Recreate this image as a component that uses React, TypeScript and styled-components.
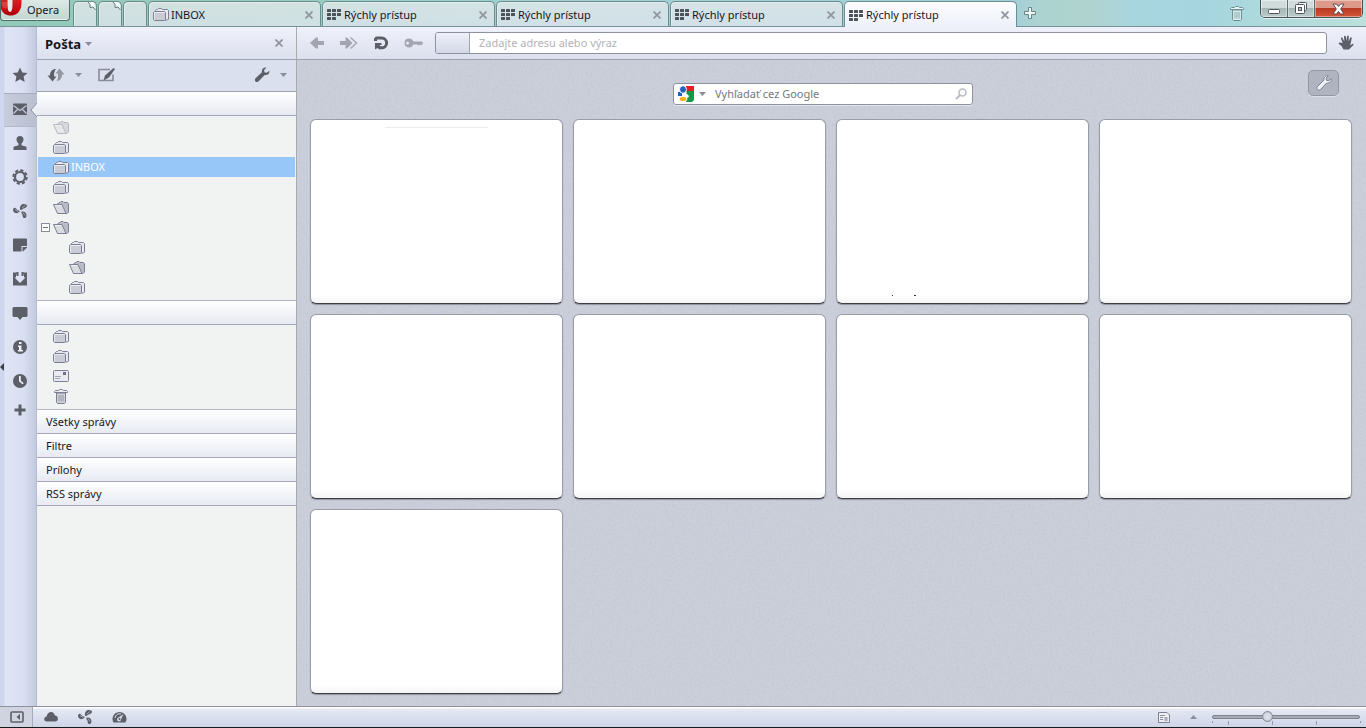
import React from "react";
import styled, { createGlobalStyle, css } from "styled-components";

const ink = "#5d5f68";
const faded = "#a3a6b0";
const line = "#9ea2b0";

const GlobalStyle = createGlobalStyle`
  * { box-sizing: border-box; }
  body {
    margin: 0;
    font-family: "Noto Sans", "Open Sans", sans-serif;
    font-size: 12px;
    line-height: 16px;
    color: #16171b;
  }
  button, input { font: inherit; color: inherit; }
  button { border: 0; padding: 0; background: none; }
  svg { display: block; flex: none; }
`;

/* ---------- window ---------- */

const Window = styled.div`
  min-height: 100vh;
  display: flex;
  flex-direction: column;
  background: #dfe3f0;
`;

const TabBar = styled.header`
  height: 27px;
  display: flex;
  align-items: flex-start;
  border-bottom: 1px solid #75919a;
  background: linear-gradient(to right, #93c9b8 0, #96ccbd 20%, #9bcfca 28%, #a3d0d6 45%, #a2cfda 74%, #acd3d0 76%, #afd4d0 80%, #a8d6df 83%, #a6d5e0 88%, #b0dbda 94%, #bde0dc 100%);
`;

const OperaButton = styled.button`
  width: 70px;
  height: 21px;
  margin-right: 3px;
  display: flex;
  align-items: center;
  gap: 4px;
  border: 1px solid #4f6e68;
  border-top: 0;
  border-radius: 0 0 4px 4px;
  background: linear-gradient(#dde9e5, #c2d6cf);
  box-shadow: inset 0 -1px 0 #e9f4f0;
  font-size: 11px;
`;

const Tabs = styled.nav`
  display: flex;
  gap: 1px;
  padding-top: 1px;
`;

const Tab = styled.div<{ $active?: boolean; $pinned?: boolean }>`
  width: ${(p) => (p.$pinned ? 24 : 173)}px;
  height: ${(p) => (p.$active ? 26 : 25)}px;
  display: flex;
  align-items: center;
  justify-content: space-between;
  padding: 1px 6px 0 4px;
  border: 1px solid #6c8d8f;
  border-bottom: 0;
  border-radius: 5px 5px 0 0;
  background: ${(p) =>
    p.$active
      ? "linear-gradient(#fdfdff, #edf0f9)"
      : "linear-gradient(rgba(224, 231, 232, .82), rgba(220, 229, 236, .8))"};
  box-shadow: inset 1px 1px 0 rgba(255, 255, 255, .35);
  ${(p) =>
    p.$pinned &&
    css`
      padding: 0;
      align-items: flex-start;
      justify-content: flex-end;
    `}
`;

const TabTitle = styled.button<{ $gap: number }>`
  display: flex;
  align-items: center;
  gap: ${(p) => p.$gap}px;
  font-size: 11px;
  white-space: nowrap;
`;

const CloseButton = styled.button`
  width: 10px;
  height: 10px;
  display: grid;
  place-items: center;
`;

const TabBarButton = styled.button`
  width: 26px;
  height: 26px;
  display: grid;
  place-items: center;
`;

const Spacer = styled.div`
  flex: 1;
`;

const WindowButtons = styled.div`
  display: flex;
  height: 18px;
  margin: 0 3px 0 10px;
  border: 1px solid #47555b;
  border-top: 0;
  border-radius: 0 0 5px 5px;
  overflow: hidden;
  box-shadow: 0 1px 0 #dff0f0;
`;

const WindowButton = styled.button<{ $close?: boolean }>`
  width: ${(p) => (p.$close ? 47 : 27)}px;
  display: grid;
  place-items: center;
  border-right: ${(p) => (p.$close ? "0" : "1px solid #5c6c70")};
  background: ${(p) =>
    p.$close
      ? "linear-gradient(#dd9a8a 0 45%, #b93a22 50%, #d4563a)"
      : "linear-gradient(#d0dcdb 0 45%, #a5b6b6 50%, #bdccca)"};
  box-shadow: inset 0 0 0 1px rgba(255, 255, 255, .4);
`;

/* ---------- left rail and panel ---------- */

const Body = styled.div`
  flex: 1;
  display: flex;
`;

const Rail = styled.nav`
  position: relative;
  width: 37px;
  flex: none;
  padding: 32px 0 0 4px;
  display: flex;
  flex-direction: column;
  background: linear-gradient(to right, #cfd7ee 0 4px, #dfe5f5 5px, #d9dff1 24px, #c3cadf 36px, #a9afc1 37px);
`;

const RailButton = styled.button<{ $active?: boolean; $short?: boolean }>`
  position: relative;
  height: ${(p) => (p.$short ? 24 : 34)}px;
  display: grid;
  place-items: center;
  padding: 0 2px 2px 0;
  ${(p) =>
    p.$active &&
    css`
      background: linear-gradient(to right, #c8cddd, #b9bfd0);
      border-top: 1px solid #a9afc0;
      border-bottom: 1px solid #b3b9ca;
    `}
`;

const Notch = styled.svg`
  position: absolute;
  right: 0;
  top: 9px;
`;

const Splitter = styled.svg`
  position: absolute;
  left: 0;
  top: 336px;
`;

const Panel = styled.aside`
  width: 260px;
  flex: none;
  display: flex;
  flex-direction: column;
  border-right: 1px solid #a9aaae;
  background: #f1f3f3;
`;

const PanelHeader = styled.div`
  height: 33px;
  display: flex;
  align-items: center;
  justify-content: space-between;
  padding: 0 12px 0 8px;
  border-bottom: 1px solid ${line};
  background: linear-gradient(#eff1fa, #dce0ee);
`;

const PanelTitle = styled.button`
  display: flex;
  align-items: center;
  gap: 4px;
  padding-top: 2px;
  font-size: 13px;
  font-weight: 700;
`;

const PanelTools = styled.div`
  height: 32px;
  display: flex;
  align-items: center;
  gap: 8px;
  padding: 0 8px 1px 10px;
  border-bottom: 1px solid ${line};
  background: #dbe0ee;
`;

const ToolButton = styled.button`
  min-width: 10px;
  height: 24px;
  display: grid;
  place-items: center;
`;

const Section = styled.button`
  height: 24px;
  flex: none;
  padding: 0 9px;
  text-align: left;
  font-size: 11px;
  border-bottom: 1px solid #a4a8b8;
  background: linear-gradient(#ffffff, #e7eaf2);
`;

const Tree = styled.ul`
  list-style: none;
  margin: 0;
  padding: 1px 1px 3px;
  border-bottom: 1px solid #b4b8c6;
`;

const TreeRow = styled.li<{ $level?: number; $selected?: boolean }>`
  height: 20px;
  display: flex;
  align-items: center;
  gap: 2px;
  padding-left: ${(p) => (p.$level ? 31 : 3)}px;
  font-size: 11px;
  color: ${(p) => (p.$selected ? "#ffffff" : "inherit")};
  background: ${(p) => (p.$selected ? "#97c6f8" : "none")};
`;

const Twist = styled.span`
  width: 10px;
`;

/* ---------- page ---------- */

const Main = styled.main`
  flex: 1;
  min-width: 0;
  display: flex;
  flex-direction: column;
`;

const AddressBar = styled.div`
  height: 33px;
  display: flex;
  align-items: center;
  padding: 0 4px;
  border-bottom: 1px solid ${line};
  background: linear-gradient(#eff1fa, #dce0ee);
`;

const NavButton = styled.button`
  width: 32px;
  height: 28px;
  display: grid;
  place-items: center;
`;

const AddressField = styled.div`
  flex: 1;
  height: 22px;
  display: flex;
  margin: 0 3px 0 6px;
  border: 1px solid #8d91a0;
  border-radius: 3px;
  overflow: hidden;
  background: #ffffff;
`;

const SiteBadge = styled.button`
  width: 34px;
  border-right: 1px solid #a1a5b3;
  background: linear-gradient(#eef0f8, #d4d9e8);
`;

const TextInput = styled.input<{ $hint: string }>`
  flex: 1;
  min-width: 0;
  padding: 0 9px;
  border: 0;
  outline: 0;
  background: none;
  font-size: 11px;
  &::placeholder {
    color: ${(p) => p.$hint};
    opacity: 1;
  }
`;

const SpeedDial = styled.section`
  position: relative;
  flex: 1;
  padding-bottom: 12px;
  background: #cbcfda;
`;

const Grain = styled.svg`
  position: absolute;
  inset: 0;
  width: 100%;
  height: 100%;
  pointer-events: none;
`;

const DialHeader = styled.div`
  position: relative;
  display: grid;
  grid-template-columns: 1fr 300px 1fr;
  align-items: start;
  padding: 10px 27px 14px 10px;
`;

const Search = styled.form`
  grid-column: 2;
  height: 22px;
  margin-top: 13px;
  display: flex;
  align-items: center;
  padding: 0 5px 0 4px;
  border: 1px solid #8e929f;
  border-radius: 3px;
  background: #ffffff;
  box-shadow: 0 1px 0 #e3e6ee;
`;

const EngineButton = styled.button`
  display: flex;
  align-items: center;
  gap: 5px;
`;

const SettingsButton = styled.button`
  justify-self: end;
  width: 31px;
  height: 26px;
  display: grid;
  place-items: center;
  border: 1px solid #9397a5;
  border-radius: 5px;
  background: #b0b3c0;
  box-shadow: 0 1px 0 #dde0e8;
`;

const Dials = styled.div`
  position: relative;
  display: grid;
  grid-template-columns: repeat(4, 1fr);
  gap: 10px;
  padding: 0 14px 0 13px;
`;

const Dial = styled.a`
  position: relative;
  display: block;
  aspect-ratio: 253 / 185;
  border: 1px solid #999ca9;
  border-bottom-color: #3d3f45;
  border-radius: 6px;
  background: linear-gradient(#ffffff calc(100% - 8px), #f4f4f4);
  box-shadow: 0 1px 1px rgba(60, 62, 70, .4);
`;

const Thumbnail = styled.svg`
  width: 100%;
  height: 100%;
`;

/* ---------- status bar ---------- */

const StatusBar = styled.footer`
  height: 22px;
  display: flex;
  align-items: stretch;
  padding-right: 6px;
  border-top: 1px solid #8d919e;
  border-bottom: 1px solid #15191c;
  background: linear-gradient(#ffffff 0 1px, #e5e9f4 2px, #ced5e7);
`;

const StatusButton = styled.button<{ $active?: boolean }>`
  width: ${(p) => (p.$active ? 33 : 34)}px;
  display: grid;
  place-items: center;
  ${(p) =>
    p.$active &&
    css`
      padding-left: 1px;
      background: #d0d4e0;
      border-right: 1px solid #a6abba;
      margin-right: 1px;
    `}
`;

const ViewTools = styled.div`
  display: flex;
  align-items: center;
  gap: 20px;
  margin-right: 15px;
`;

const ViewButton = styled.button``;

const Zoom = styled.label`
  position: relative;
  width: 148px;
  display: flex;
`;

const Ticks = styled.svg`
  position: absolute;
  left: 0;
  top: 14px;
`;

const Range = styled.input`
  appearance: none;
  width: 100%;
  height: 20px;
  margin: 0;
  background: none;
  &::-webkit-slider-runnable-track {
    height: 4px;
    border: 1px solid #7f8390;
    border-radius: 2px;
    background: #a7abb8;
  }
  &::-webkit-slider-thumb {
    appearance: none;
    width: 11px;
    height: 11px;
    margin-top: -5px;
    border: 1px solid #858995;
    border-radius: 50%;
    background: #d9dde8;
    box-shadow: inset 0 0 0 1px #c1c5d1;
  }
`;

/* ---------- icons ---------- */

type IconProps = { size?: number; color?: string; children?: React.ReactNode };
const Icon = ({ size = 16, color = ink, children }: IconProps) => (
  <svg width={size} height={size} viewBox="0 0 16 16" fill={color} aria-hidden="true">
    {children}
  </svg>
);

const Cross = () => (
  <svg width="8" height="8" viewBox="0 0 8 8" aria-hidden="true">
    <path d="M.5 .5l7 7M7.500 .5l-7 7" stroke="#92969f" strokeWidth="1.800" />
  </svg>
);

const Caret = () => (
  <svg width="7" height="4" viewBox="0 0 7 4" fill="#8b8e9a" aria-hidden="true">
    <path d="M0 0h7L3.500 4z" />
  </svg>
);

const OperaLogo = () => (
  <svg width="22" height="20" viewBox="0 0 22 20" aria-hidden="true">
    <defs>
      <linearGradient id="opera" x1="0" y1="0" x2="0" y2="1">
        <stop offset="0" stopColor="#d81e22" />
        <stop offset=".6" stopColor="#c90a12" />
        <stop offset="1" stopColor="#a80008" />
      </linearGradient>
    </defs>
    <path d="M0 0h20.500v3c0 7-4 12.500-10.500 12.500C4.500 15.500 1.500 13 0 9z" fill="url(#opera)" />
    <path d="M6.500 0h5v4c0 4.500-.8 8-2.500 8S6.500 9 6.500 4z" fill="#e3ecea" />
    <path d="M1 6c1.500 2.500 3.500 3 5 2V2L1 2z" fill="#f08a88" opacity=".35" />
  </svg>
);

const PageCorner = () => (
  <svg width="9" height="9" viewBox="0 0 9 9" aria-hidden="true">
    <path d="M1 0l2 2.500v3l3-.5 2 2.500V3L6 0z" fill="#f8fbfb" />
    <path d="M1 0l2 2.500v3l3-.5 2.500 3" fill="none" stroke="#5f7a79" />
  </svg>
);

const GridIcon = () => (
  <svg width="14" height="11" viewBox="0 0 14 11" fill="#4b525c" aria-hidden="true">
    {[0, 5, 10].map((x) =>
      [0, 4, 8].map((y) => (x === 10 && y === 8 ? null : <rect key={`${x}-${y}`} x={x} y={y} width="4" height="3" rx=".5" />))
    )}
  </svg>
);

const Folder = () => (
  <svg width="16" height="13" viewBox="0 0 16 13" stroke="#7d8092" aria-hidden="true">
    <path d="M2.500 3.500V2.500l1-1h1l1-1h3l1 1h5l1 1v8.500l-1 1H12" fill="#e6e8ed" />
    <path d="M.500 4.500l1-1H11.500l1 1v7l-1 1H1.500l-1-1z" fill="#c9ccd4" />
    <path d="M1.500 11.500v-7H11.500" fill="none" stroke="#e9ebef" />
  </svg>
);

const OpenFolder = ({ dim }: { dim?: boolean }) => (
  <svg width="16" height="13" viewBox="0 0 16 13" stroke="#7d8092" opacity={dim ? 0.5 : 1} aria-hidden="true">
    <path d="M4.500 3l1.500-1.500h1l1-1h2l1 1h3.500l1 1V11l-1.500 1.500H5z" fill="#b9bcc7" />
    <path d="M.500 3.500H9l4 9H4.500z" fill="#d9dbe1" />
    <path d="M2 4.500h6.500" stroke="#eff0f3" />
  </svg>
);

const Letter = () => (
  <svg width="16" height="12" viewBox="0 0 16 12" aria-hidden="true">
    <rect x=".5" y=".5" width="15" height="11" rx="1" fill="#e9ebf0" stroke="#7d8092" />
    <path d="M10 2h3v3h-3z" fill="#6f7283" />
    <path d="M2 6.500h6M2 8.500h5" stroke="#a0a3b0" />
  </svg>
);

const Trash = ({ light }: { light?: boolean }) => (
  <svg width="16" height="15" viewBox="0 0 16 15" stroke={light ? "#6f9196" : "#7d8092"} aria-hidden="true">
    <path d="M3.500 4h9v9.500l-1 1h-7l-1-1z" fill={light ? "#d6eaea" : "#d0d3da"} />
    <path d="M1.500 3.500v-1l1-1h3l1-1h3l1 1h3l1 1v1z" fill={light ? "#e7f3f3" : "#eceef2"} />
    <path d="M6 6v6.500M8 6v6.500M10 6v6.500" opacity=".7" />
  </svg>
);

const Collapse = () => (
  <svg width="9" height="9" viewBox="0 0 9 9" aria-hidden="true">
    <rect x=".5" y=".5" width="8" height="8" fill="#fbfbfb" stroke="#8b8d99" />
    <path d="M2 4.500h5" stroke="#6d6f7c" />
  </svg>
);

const Share = () => (
  <Icon>
    <path d="M8 6.500C7.500 3 9.500 1 12 1c1.500 0 3 .8 3 1.800C15 5 12 5 10.500 6.200 9.500 7 8.500 7.500 8 6.500z" />
    <path d="M7.500 8.500C5.500 11 2.800 10.500 1.500 8.500 .7 7.200 1 5.500 2 5c1.800-.8 2.300 1.800 4 2.300 1.200.3 2 .5 1.500 1.200z" />
    <path d="M9.500 8.800c3-.8 5 1.200 5 3.600 0 1.600-1.200 2.900-2.400 2.600-1.900-.4-1-2.600-2-4-.6-1-1.400-1.900-.6-2.200z" />
    <path d="M10 5l3-2.500M3 6.500l3 2M11 9.500l2 3" stroke="#a2a5b1" strokeWidth="1" />
  </Icon>
);

const wrench =
  "M15.300 3.700l-2.500 2-2.300-.4-.4-2.300L12.300.7C9.600.2 7.500 2.200 7.900 5.200L1.600 11.300c-1.100 1-.9 2.700.1 3.400.9.700 2.200.500 3-.4l5.900-6.200c3.200.3 5.200-1.800 4.700-4.400z";

const railIcons: { name: string; art: React.ReactNode }[] = [
  { name: "Záložky", art: <Icon><path d="M8 .500l2.300 5 5.200.500-3.900 3.600 1.100 5.400L8 12.300 3.300 15l1.100-5.400L.500 6l5.200-.500z" /></Icon> },
  { name: "Pošta", art: <Icon><rect x="1" y="2.500" width="14" height="11.500" rx="1" /><path d="M1.500 4.500L8 9.500l6.500-5M1.500 12.500l4-4M14.500 12.500l-4-4" fill="none" stroke="#c3c8d7" strokeWidth="1.200" /></Icon> },
  { name: "Kontakty", art: <Icon><path d="M8 1c2.300 0 3.500 1.500 3.500 3.500 0 1.800-.9 3.200-2 4V10.300l5 1.400V15h-13v-3.300l5-1.400V8.500c-1.100-.8-2-2.200-2-4C4.500 2.500 5.700 1 8 1z" /></Icon> },
  { name: "Nastavenia", art: <Icon><circle cx="8" cy="8" r="6.700" fill="none" stroke={ink} strokeWidth="2" strokeDasharray="3.260 2" /><circle cx="8" cy="8" r="5" fill="none" stroke={ink} strokeWidth="2.200" /></Icon> },
  { name: "Unite", art: <Share /> },
  { name: "Poznámky", art: <Icon><path d="M1.500 1.500h13l.5.5v7H9.500v5.500h-8L1 14V2z" /><path d="M15 10v.500L11 14.500h-.5V10z" /></Icon> },
  { name: "Prenosy", art: <Icon><path d="M1 1.500h14v13H1z" /><path d="M5 1h6v1.500L12 4v2.500h1.500L8 12 2.500 6.500H4V4l1-1.500z" fill="#dce2f3" /><path d="M4.500 1h2v4h-2zM9.500 1h2v4h-2z" /></Icon> },
  { name: "Rozhovor", art: <Icon><path d="M1.500 2h13l1 1v8l-1 1h-4L8 15l-2.500-3h-4l-1-1V3z" /></Icon> },
  { name: "Informácie", art: <Icon><circle cx="8" cy="8" r="7" /><path d="M7 3h2.500v2H7zM6 6.500h3.500V11H11v1.500H6V11h1V8H6z" fill="#eef0f8" /></Icon> },
  { name: "História", art: <Icon><circle cx="8" cy="8" r="7" /><path d="M7 3h1.800v4.700l3 2.500-1.300 1L7 8.500z" fill="#eef0f8" /></Icon> },
];

/* ---------- content ---------- */

type Kind = "folder" | "open" | "dim" | "letter" | "trash";
type Row = { kind: Kind; label?: string; level?: number; expanded?: boolean };

const account: Row[] = [
  { kind: "dim" },
  { kind: "folder" },
  { kind: "folder", label: "INBOX" },
  { kind: "folder" },
  { kind: "open" },
  { kind: "open", expanded: true },
  { kind: "folder", level: 1 },
  { kind: "open", level: 1 },
  { kind: "folder", level: 1 },
];

const local: Row[] = [{ kind: "folder" }, { kind: "folder" }, { kind: "letter" }, { kind: "trash" }];

const art: Record<Kind, React.ReactNode> = {
  folder: <Folder />,
  open: <OpenFolder />,
  dim: <OpenFolder dim />,
  letter: <Letter />,
  trash: <Trash />,
};

const FolderTree = ({ rows }: { rows: Row[] }) => (
  <Tree>
    {rows.map((row, i) => (
      <TreeRow key={i} $level={row.level} $selected={row.label === "INBOX"}>
        {!row.level && <Twist>{row.expanded && <Collapse />}</Twist>}
        {art[row.kind]}
        {row.label}
      </TreeRow>
    ))}
  </Tree>
);

const quickTabs = [false, false, false, true];

export default function App() {
  return (
    <Window>
      <GlobalStyle />
      <TabBar>
        <OperaButton>
          <OperaLogo />
          Opera
        </OperaButton>
        <Tabs aria-label="Karty">
          <Tab $pinned><PageCorner /></Tab>
          <Tab $pinned><PageCorner /></Tab>
          <Tab $pinned />
          <Tab>
            <TabTitle $gap={2}><Folder />INBOX</TabTitle>
            <CloseButton aria-label="Zavrieť kartu"><Cross /></CloseButton>
          </Tab>
          {quickTabs.map((active, i) => (
            <Tab key={i} $active={active}>
              <TabTitle $gap={3}><GridIcon />Rýchly prístup</TabTitle>
              <CloseButton aria-label="Zavrieť kartu"><Cross /></CloseButton>
            </Tab>
          ))}
        </Tabs>
        <TabBarButton aria-label="Nová karta">
          <svg width="14" height="14" viewBox="0 0 14 14" aria-hidden="true">
            <path d="M5.500 1.500h3v4h4v3h-4v4h-3v-4h-4v-3h4z" fill="#eef7f3" stroke="#66877f" />
          </svg>
        </TabBarButton>
        <Spacer />
        <TabBarButton aria-label="Zatvorené karty"><Trash light /></TabBarButton>
        <WindowButtons>
          <WindowButton aria-label="Minimalizovať">
            <svg width="13" height="12" viewBox="0 0 13 12"><rect x=".5" y="6.500" width="11" height="4" rx="1" fill="#fff" stroke="#4d525c" /></svg>
          </WindowButton>
          <WindowButton aria-label="Obnoviť">
            <svg width="13" height="13" viewBox="0 0 13 13" fill="#fff" stroke="#4d525c"><rect x="3.500" y=".5" width="8" height="8" rx="1" /><rect x=".5" y="2.500" width="9" height="9" rx="1" /><rect x="3.500" y="5.500" width="3" height="3" fill="#b7c5c6" /></svg>
          </WindowButton>
          <WindowButton $close aria-label="Zavrieť">
            <svg width="13" height="12" viewBox="0 0 13 12"><path d="M1 1h3.500l2 2.500 2-2.500H12L8.700 6l3.300 5H8.500l-2-2.500-2 2.500H1l3.300-5z" fill="#fff" stroke="#5b4a52" /></svg>
          </WindowButton>
        </WindowButtons>
      </TabBar>

      <Body>
        <Rail aria-label="Panely">
          {railIcons.map(({ name, art: drawing }) => (
            <RailButton key={name} aria-label={name} $active={name === "Pošta"}>
              {drawing}
              {name === "Pošta" && (
                <Notch width="7" height="14" viewBox="0 0 7 14"><path d="M7 0L1 7l6 7" fill="#eceff6" stroke="#8f94a5" /></Notch>
              )}
            </RailButton>
          ))}
          <RailButton $short aria-label="Pridať panel">
            <Icon><path d="M6.500 2.500h3v4h4v3h-4v4h-3v-4h-4v-3h4z" /></Icon>
          </RailButton>
          <Splitter width="4" height="8" viewBox="0 0 4 8"><path d="M4 0v8L0 4z" fill="#3b3f4a" /></Splitter>
        </Rail>

        <Panel>
          <PanelHeader>
            <PanelTitle>Pošta<Caret /></PanelTitle>
            <CloseButton aria-label="Zavrieť panel"><Cross /></CloseButton>
          </PanelHeader>
          <PanelTools>
            <ToolButton aria-label="Skontrolovať poštu">
              <svg width="18" height="14" viewBox="0 0 18 14" aria-hidden="true">
                <path d="M9 1C5.500 1 2.800 3.500 3 7.500H.500L5.500 13.500l4-5H7.200C6.500 5.500 7.500 3 9 1z" fill={ink} />
                <path d="M9.500 13c3.500 0 5.800-3 5.500-6.500h2.500L12.500.500l-4 5h2.300C11.500 8.500 11 11 9.500 13z" fill="#9396a1" />
              </svg>
            </ToolButton>
            <ToolButton aria-label="Možnosti kontroly"><Caret /></ToolButton>
            <ToolButton aria-label="Nová správa">
              <svg width="32" height="14" viewBox="-7 0 32 14" aria-hidden="true">
                <path d="M12 1.500H1v11h14V6.500" fill="none" stroke="#8a8d98" strokeWidth="1.600" />
                <path d="M15.500 0L17 1l-6 8.500L5.500 12.500l1.500-5z" fill={ink} />
              </svg>
            </ToolButton>
            <Spacer />
            <ToolButton aria-label="Nastavenia"><Icon><path d={wrench} /></Icon></ToolButton>
            <ToolButton aria-label="Možnosti"><Caret /></ToolButton>
          </PanelTools>
          <Section aria-label="Účet" />
          <FolderTree rows={account} />
          <Section aria-label="Miestne priečinky" />
          <FolderTree rows={local} />
          <Section>Všetky správy</Section>
          <Section>Filtre</Section>
          <Section>Prílohy</Section>
          <Section>RSS správy</Section>
        </Panel>

        <Main>
          <AddressBar>
            <NavButton aria-label="Späť">
              <Icon color={faded}><path d="M1 8L7 2.500h2v3.500h6v4H9v3.500H7z" /></Icon>
            </NavButton>
            <NavButton aria-label="Dopredu">
              <svg width="18" height="14" viewBox="0 0 18 14" aria-hidden="true">
                <path d="M0 5h5.500V1.500H7L12.500 7 7 12.500H5.500V9H0z" fill={faded} />
                <path d="M10.500 1.500L16.500 7l-6 5.500" fill="none" stroke={faded} strokeWidth="1.400" />
              </svg>
            </NavButton>
            <NavButton aria-label="Obnoviť">
              <Icon>
                <path d="M2.500 6V4l1-1h5.200a4.800 4.800 0 0 1 0 9.800H7" fill="none" stroke={ink} strokeWidth="3" />
                <path d="M2 8h6.500v2H6.500l1 1.500v2.800H6L4.500 13 2 14.500z" />
              </Icon>
            </NavButton>
            <NavButton aria-label="Heslá">
              <svg width="19" height="12" viewBox="0 0 19 12" fill={faded} aria-hidden="true">
                <path d="M5 1.500a4.500 4.500 0 0 1 4.300 3H18l1 1.500-1.500 2.500-1.500-1-1.500 1-1.500-1H9.300A4.500 4.500 0 1 1 5 1.500zM3.500 4.500a1.500 1.500 0 1 0 0 3 1.500 1.500 0 0 0 0-3z" fillRule="evenodd" />
              </svg>
            </NavButton>
            <AddressField>
              <SiteBadge aria-label="Informácie o stránke" />
              <TextInput $hint="#b1b3b8" aria-label="Adresa" placeholder="Zadajte adresu alebo výraz" />
            </AddressField>
            <NavButton aria-label="Blokovanie">
              <Icon><path d="M4.700 8L3 3.700c-.3-1 1-1.700 1.500-.7L6.300 6.200 6 1.700C6 .400 7.500.300 7.800 1.500l.7 4.300.6-4.500c.2-1.100 1.700-.9 1.700.2L10.600 6.500l1.600-3.700c.5-1 1.800-.5 1.500.6L12.200 10.500l2-1.500c.9-.6 1.800.4 1 1.200L11 14.500H5.500L3.500 11 1 9c-.8-.8.1-2 1.200-1.500z" /></Icon>
            </NavButton>
          </AddressBar>

          <SpeedDial>
            <Grain aria-hidden="true">
              <filter id="grain">
                <feTurbulence type="fractalNoise" baseFrequency=".45" numOctaves="2" seed="4" />
                <feColorMatrix values="0 0 0 0 .45  0 0 0 0 .48  0 0 0 0 .58  .6 0 0 0 -.24" />
              </filter>
              <rect width="100%" height="100%" filter="url(#grain)" />
            </Grain>
            <DialHeader>
              <Search onSubmit={(e) => e.preventDefault()}>
                <EngineButton type="button" aria-label="Vyhľadávač">
                  <svg width="16" height="16" viewBox="0 0 16 16" aria-hidden="true">
                    <path d="M8 0h8v6H8z" fill="#ec1c24" />
                    <path d="M9 5h7v9l-2 2H8V9z" fill="#109a48" />
                    <path d="M0 6h4v4H0z" fill="#1e62b8" />
                    <ellipse cx="5" cy="3.500" rx="3.500" ry="3.800" fill="#2465bc" stroke="#fff" />
                    <path d="M4 7l5 1 2 2-1 2-6-2z" fill="#fff" />
                    <ellipse cx="5" cy="13" rx="4" ry="2.700" fill="#f6b21b" stroke="#fff" />
                  </svg>
                  <Caret />
                </EngineButton>
                <TextInput $hint="#75777c" aria-label="Vyhľadávanie" placeholder="Vyhľadať cez Google" />
                <svg width="12" height="12" viewBox="0 0 12 12" fill="none" stroke="#b9bcc6" strokeWidth="1.600" aria-hidden="true">
                  <circle cx="7.500" cy="4.500" r="3.500" /><path d="M5 7L1 11" strokeWidth="2" />
                </svg>
              </Search>
              <SettingsButton aria-label="Nastaviť rýchly prístup">
                <svg width="18" height="18" viewBox="-1 -1 18 18" aria-hidden="true"><path d={wrench} fill="#f0f1f4" stroke="#7c808e" /></svg>
              </SettingsButton>
            </DialHeader>
            <Dials>
              {Array.from({ length: 9 }, (_, i) => (
                <Dial key={i} href="#" aria-label={`Rýchly prístup ${i + 1}`}>
                  {i === 0 && (
                    <Thumbnail viewBox="0 0 251 183" aria-hidden="true"><path d="M74 7.500h103" stroke="#ececec" /></Thumbnail>
                  )}
                  {i === 2 && (
                    <Thumbnail viewBox="0 0 251 183" aria-hidden="true"><path d="M55 175.500h1M77 175.500h2" stroke="#34343c" /></Thumbnail>
                  )}
                </Dial>
              ))}
            </Dials>
          </SpeedDial>
        </Main>
      </Body>

      <StatusBar>
        <StatusButton $active aria-label="Panely">
          <svg width="14" height="12" viewBox="0 0 14 12" aria-hidden="true">
            <rect x="1" y="1" width="12" height="10" rx="1" fill="none" stroke={ink} strokeWidth="1.600" /><path d="M10 3v6L6.500 6z" fill={ink} />
          </svg>
        </StatusButton>
        <StatusButton aria-label="Synchronizácia">
          <svg width="14" height="10" viewBox="0 0 14 10" fill={ink} aria-hidden="true"><path d="M2.500 9.500c-3 0-3.200-4.500.2-5C3 1.500 5 0 7 0s3.500 1.200 3.800 3.500c4 .2 4.200 6 .5 6z" /></svg>
        </StatusButton>
        <StatusButton aria-label="Unite"><Share /></StatusButton>
        <StatusButton aria-label="Turbo">
          <svg width="15" height="12" viewBox="0 0 15 12" aria-hidden="true">
            <path d="M1.500 11.500a7 7 0 1 1 12 0z" fill={ink} />
            <path d="M3 7a4.500 4.500 0 0 1 6-4" fill="none" stroke="#d4daea" />
            <path d="M11.500 3L9 8.500A2 2 0 1 1 6.500 6.500z" fill="#d4daea" /><circle cx="7.500" cy="8" r="1" fill={ink} />
          </svg>
        </StatusButton>
        <Spacer />
        <ViewTools>
          <ViewButton aria-label="Zobrazenie">
            <svg width="12" height="11" viewBox="0 0 12 11" aria-hidden="true">
              <path d="M.500.500H9l2.500 2.500v7.500H.500z" fill="#eceef4" stroke="#7e8290" />
              <path d="M2 3.500h5M2 5.500h3M2 7.500h3" stroke="#8d919e" /><path d="M6.500 5h3v4h-3z" fill="#a5a9b7" />
            </svg>
          </ViewButton>
          <ViewButton aria-label="Ponuka priblíženia">
            <svg width="7" height="4" viewBox="0 0 7 4" aria-hidden="true"><path d="M0 4h7L3.500 0z" fill="#8b8e9a" /></svg>
          </ViewButton>
        </ViewTools>
        <Zoom aria-label="Priblíženie">
          <Range type="range" min="0" max="100" defaultValue="36" />
          <Ticks width="149" height="4" viewBox="0 0 149 4" stroke="#989caa" aria-hidden="true">
            <path d="M.500 0v2M16.500 0v4M60.500 0v4M104.500 0v4M148.500 0v2" />
          </Ticks>
        </Zoom>
      </StatusBar>
    </Window>
  );
}
